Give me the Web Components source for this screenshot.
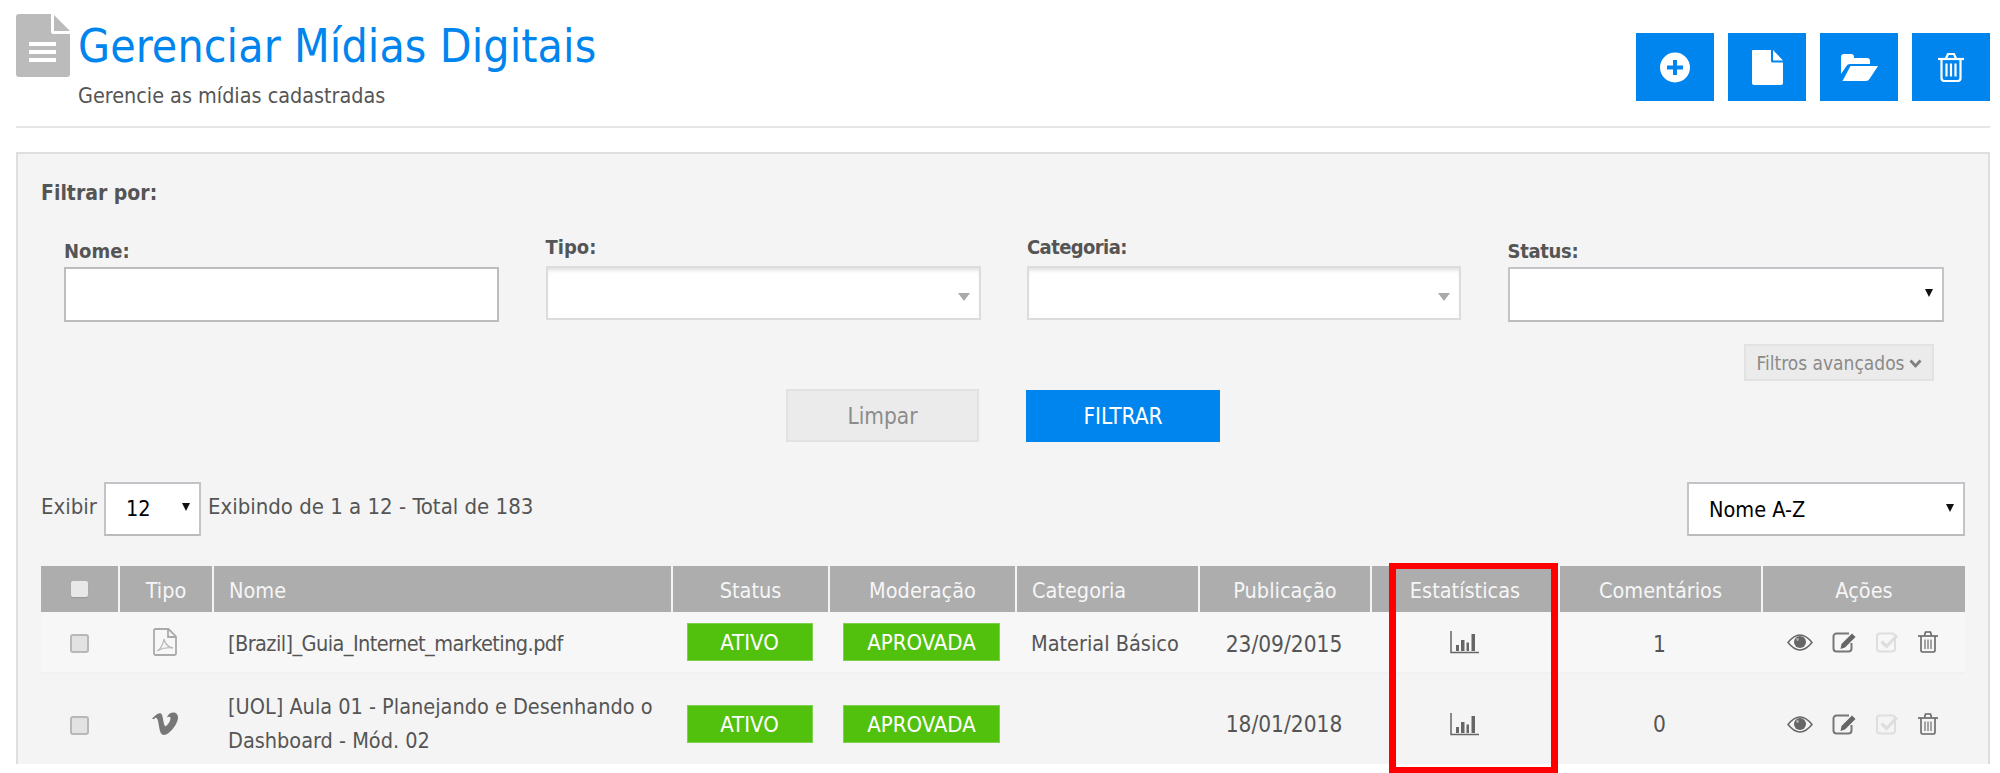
<!DOCTYPE html>
<html lang="pt-BR">
<head>
<meta charset="utf-8">
<title>Gerenciar Mídias Digitais</title>
<style>
html,body{margin:0;padding:0;background:#fff;}
body{width:2000px;height:773px;overflow:hidden;font-family:"DejaVu Sans Condensed","DejaVu Sans",sans-serif;font-stretch:condensed;color:#555;}
</style>
</head>
<body>
<media-page>
  <page-header slot="header" heading="Gerenciar Mídias Digitais" sub="Gerencie as mídias cadastradas">
    <icon-button icon="plus"></icon-button>
    <icon-button icon="file"></icon-button>
    <icon-button icon="folder"></icon-button>
    <icon-button icon="trash"></icon-button>
  </page-header>
  <filter-panel slot="panel">
    <span slot="title">Filtrar por:</span>
    <form-field slot="fields" label="Nome:" style="--top:1px"><text-box></text-box></form-field>
    <form-field slot="fields" label="Tipo:" style="--lift:-3px"><select-box kind="chosen"></select-box></form-field>
    <form-field slot="fields" label="Categoria:" style="--lift:-3px;--ls:-.6px"><select-box kind="chosen"></select-box></form-field>
    <form-field slot="fields" label="Status:" style="--top:1px;--ls:-.3px;--h:55px"><select-box></select-box></form-field>
    <advanced-toggle slot="advanced">Filtros avançados</advanced-toggle>
    <action-button slot="actions" kind="muted">Limpar</action-button>
    <action-button slot="actions" kind="primary">FILTRAR</action-button>
    <list-toolbar slot="toolbar" summary="Exibindo de 1 a 12 - Total de 183"></list-toolbar>
    <media-table slot="table">
      <media-row name="[Brazil]_Guia_Internet_marketing.pdf" type="pdf" category="Material Básico" date="23/09/2015" comments="1" style="--row-bg:#f7f7f7;--row-h:60px;--row-bb:2px solid #f1f1f1;--name-ls:-.57px;--text-dy:4px"></media-row>
      <media-row name="[UOL] Aula 01 - Planejando e Desenhando o Dashboard - Mód. 02" type="vimeo" category="" date="18/01/2018" comments="0" style="--row-bg:#f4f4f4;--row-h:100px;--date-dy:-1px"></media-row>
    </media-table>
  </filter-panel>
  <highlight-box slot="overlay"></highlight-box>
</media-page>

<script>
const ICONS = {
  plus:'<svg width="30" height="31" viewBox="0 0 30 31"><path fill="#fff" fill-rule="evenodd" d="M15 .5a15 15 0 1 1 0 30 15 15 0 0 1 0-30zM13 8v5.500H7v4h6V23h4v-5.500h6v-4h-6V8z"/></svg>',
  file:'<svg width="31" height="35" viewBox="0 0 31 35"><path fill="#fff" d="M1 0h18v11a1.500 1.500 0 0 0 1.500 1.500H31V33a2 2 0 0 1-2 2H2a2 2 0 0 1-2-2V1a1 1 0 0 1 1-1z"/><path fill="#fff" d="M21 0l10 10.500H21z"/></svg>',
  folder:'<svg width="37" height="27" viewBox="0 0 37 27"><path fill="#fff" d="M0 20V3a3 3 0 0 1 3-3h7a3 3 0 0 1 3 3v1h13a3 3 0 0 1 3 3v3H9a4 4 0 0 0-3.500 2z"/><path fill="#fff" d="M9.500 12H37l-8.500 13a5 5 0 0 1-3.500 2H1.500z"/></svg>',
  trash:'<svg width="28" height="30" viewBox="0 0 28 30"><g fill="none" stroke="#fff" stroke-width="2.200"><path d="M1 7h26"/><path d="M9 6.500l2-4.500h6l2 4.500"/><path d="M4.500 7v19a3 3 0 0 0 3 3h13a3 3 0 0 0 3-3V7"/></g><path stroke="#fff" stroke-width="2.200" d="M9.500 11.500V24.500M14 11.500V24.500M18.500 11.500V24.500"/></svg>',
  chart:'<svg width="29" height="23" viewBox="0 0 29 23"><path d="M1 0v21.500h28" fill="none" stroke="#666" stroke-width="1.500"/><path fill="#666" d="M6 14h3v6H6zM11 9h3.500v11H11zM16.500 11.500H19V20h-2.500zM21.500 3H25v17h-3.500z"/></svg>',
  eye:'<svg width="26" height="17" viewBox="0 0 26 17"><path d="M1 8.500C5 3.500 9 1 13 1s8 2.500 12 7.500c-4 5-8 7.500-12 7.500S5 13.500 1 8.500z" fill="none" stroke="#666" stroke-width="1.500"/><circle cx="13" cy="8" r="6" fill="#666"/><circle cx="10.500" cy="5.500" r="1.400" fill="#aaa"/></svg>',
  edit:'<svg width="25" height="21" viewBox="0 0 25 21"><path d="M17 1.500H4.500a3 3 0 0 0-3 3v12a3 3 0 0 0 3 3h12a3 3 0 0 0 3-3V11" fill="none" stroke="#777" stroke-width="2"/><path fill="#666" d="M20 1.500l3.500 3.500L13 15.500 8.500 17l1-5z"/></svg>',
  check:'<svg width="23" height="21" viewBox="0 0 23 21"><rect x="1" y="1.500" width="18" height="18" rx="3" fill="none" stroke="#dedede" stroke-width="2"/><path d="M5.500 9.500l5 5L21 3.500" fill="none" stroke="#dedede" stroke-width="3.200"/></svg>',
  trash2:'<svg width="20" height="22" viewBox="0 0 20 22"><g fill="none" stroke="#666" stroke-width="1.600"><path d="M0 5h20"/><path d="M6.500 4.500l1-3.500h5l1 3.500"/><path d="M3 5v14.500A1.500 1.500 0 0 0 4.500 21h11a1.500 1.500 0 0 0 1.500-1.500V5"/></g><path stroke="#888" stroke-width="1.500" d="M7 8.500V18M10 8.500V18M13 8.500V18"/></svg>',
  pdf:'<svg width="24" height="28" viewBox="0 0 24 28"><g fill="none" stroke="#aaa" stroke-width="1.800"><path d="M15.500 1H2.500A1.500 1.500 0 0 0 1 2.500v23A1.500 1.500 0 0 0 2.500 27h19a1.500 1.500 0 0 0 1.500-1.500V8.500z"/><path d="M15 1v8h8"/></g><path d="M4 23c3-1 6-6 7-12 1 5 4 8 9 9-5-1-11 0-16 3z" fill="none" stroke="#bbb" stroke-width="1.300"/></svg>',
  vimeo:'<svg width="26" height="23" viewBox="0 0 26 23"><path fill="#777" d="M0 6.500C3 3.500 6.500 0 9 1.500c2.200 1.400 2 10 4 12.500 1.500 1.500 5.500-5 5.500-7.500 0-2-1.500-2.300-3.500-1.300C16.500-.5 26-2 26 5.500 26 12 17 23 12 23 6.500 23 7.500 10 5 6.500c-1-1.300-2-.5-3.500.8z"/></svg>'
};
function def(name, css, html){
  customElements.define(name, class extends HTMLElement{
    connectedCallback(){
      if(this.shadowRoot) return;
      const r=this.attachShadow({mode:'open'});
      r.innerHTML='<style>'+css+'</style>'+(typeof html==='function'?html(this):html);
    }
  });
}
const esc=s=>(s||'').replace(/&/g,'&amp;').replace(/</g,'&lt;');

def('media-page',
 ':host{display:block;position:relative;width:2000px;height:773px;overflow:hidden;box-sizing:border-box;padding:14px 10px 0 16px}',
 '<slot name="header"></slot><slot name="panel"></slot><slot name="overlay"></slot>');

def('page-header',
 `:host{display:flex;box-sizing:border-box;height:114px;border-bottom:2px solid #e6e6e6;margin-bottom:24px}
  .doc{flex:none;width:54px;height:63px;margin-right:8px}
  .txt{flex:1;min-width:0}
  h1{margin:0;font-weight:400;font-size:46px;line-height:48px;margin-top:8px;color:#0084ee;letter-spacing:.1px;white-space:nowrap}
  p{margin:0;font-size:21.400px;line-height:22px;margin-top:15px;color:#555;white-space:nowrap}
  .btns{display:flex;gap:14px;margin-top:19px;height:68px}`,
 h=>`<svg class="doc" viewBox="0 0 54 63"><path fill="#bbb" d="M3 0h32v18a2 2 0 0 0 2 2h17v40a3 3 0 0 1-3 3H3a3 3 0 0 1-3-3V3a3 3 0 0 1 3-3z"/><path fill="#bbb" d="M38 1l16 16H38z"/><path fill="#fff" d="M13 28h27v4H13zM13 36h27v4H13zM13 44h27v4H13z"/></svg>
  <div class="txt"><h1>${esc(h.getAttribute('heading'))}</h1><p>${esc(h.getAttribute('sub'))}</p></div>
  <div class="btns"><slot></slot></div>`);

def('icon-button',
 `:host{display:flex;align-items:center;justify-content:center;width:78px;height:68px;background:#0084ee}`,
 h=>ICONS[h.getAttribute('icon')]);

def('filter-panel',
 `:host{display:block;box-sizing:border-box;width:1974px;height:612px;overflow:hidden;background:#f4f4f4;border:2px solid #dedede;border-bottom:0;padding:27px 23px 0}
  .title{font-weight:700;font-size:21px;line-height:24px;color:#555;margin-bottom:33px;white-space:nowrap}
  .fields{display:grid;grid-template-columns:435px 435px 434px 436px;column-gap:46.500px;padding-left:23px;height:83px}
  .adv{display:flex;justify-content:flex-end;margin-top:23px;padding-right:31px}
  .acts{display:flex;align-items:flex-end;gap:47px;margin-top:8px;padding-left:745px}
  .tb{margin-top:40px}
  .tbl{margin-top:31px}`,
 `<div class="title"><slot name="title"></slot></div>
  <div class="fields"><slot name="fields"></slot></div>
  <div class="adv"><slot name="advanced"></slot></div>
  <div class="acts"><slot name="actions"></slot></div>
  <div class="tb"><slot name="toolbar"></slot></div>
  <div class="tbl"><slot name="table"></slot></div>`);

def('form-field',
 `:host{display:block;padding-top:var(--top,0);--box-h:var(--h,54px)}
  label{display:block;height:28px;line-height:24px;font-weight:700;font-size:20px;color:#555;white-space:nowrap;letter-spacing:var(--ls,0)}
  span{display:block;transform:translateY(var(--lift,0))}`,
 h=>`<label><span>${esc(h.getAttribute('label'))}</span></label><slot></slot>`);

def('text-box',
 `:host{display:block;box-sizing:border-box;height:55px;background:#fff;border:2px solid #bdbdbd}`, '');

def('select-box',
 `:host{display:flex;box-sizing:border-box;height:var(--box-h,54px);background:#fff;align-items:center;justify-content:space-between;border:2px solid #c4c4c8;border-bottom-color:#bbb;padding:0 9px 0 18px;color:#000;font-size:21.500px}
  :host([kind=chosen]){border-color:#dcdcdc;box-shadow:inset 0 4px 4px -2px #ddd;padding-right:9px}
  i{display:block;width:0;height:0;border-left:4px solid transparent;border-right:4px solid transparent;border-top:8px solid #111;margin-top:-3px}
  :host([kind=chosen]) i{border-left-width:6px;border-right-width:6px;border-top:8px solid #aaa;margin-top:7px}`,
 `<span><slot></slot></span><i></i>`);

def('advanced-toggle',
 `:host{display:flex;align-items:center;justify-content:center;gap:4px;box-sizing:border-box;width:190px;height:37px;background:#ebebeb;border:2px solid #e2e2e2;color:#8a8a8a;font-size:19px;white-space:nowrap}
  svg{margin-top:2px}`,
 `<span><slot></slot></span><svg width="13" height="10" viewBox="0 0 13 10"><path d="M1.500 1.500L6.500 7l5-5.500" fill="none" stroke="#808080" stroke-width="2.800"/></svg>`);

def('action-button',
 `:host{display:flex;align-items:center;justify-content:center;box-sizing:border-box;width:193px;height:52px;font-size:22.500px}
  :host([kind=muted]){height:53px;background:#ebebeb;border:2px solid #e2e2e2;color:#8c8c8c}
  :host([kind=primary]){width:194px;background:#0084ee;color:#fff;font-weight:400}`,
 `<slot></slot>`);

def('list-toolbar',
 `:host{display:flex;justify-content:space-between;height:53px;font-size:22px;color:#555}
  .l{display:flex;align-items:center;gap:7px;white-space:nowrap}
  .txt{margin-top:-5px}
  select-box{width:97px;padding-left:20px}
  .r{width:278px}`,
 h=>`<div class="l"><span class="txt">Exibir</span><select-box>12</select-box><span class="txt">${esc(h.getAttribute('summary'))}</span></div>
     <select-box class="r">Nome A-Z</select-box>`);

const COLS='77px 94px 459px 157px 187px 183px 172px 188px 203px 204px';
def('media-table',
 `:host{display:block;width:1924px;--cols:${COLS}}
  .head{display:grid;grid-template-columns:var(--cols);height:46px;background:#adadad;color:#f6f6f6;font-size:21.500px}
  .head>div{display:flex;align-items:center;justify-content:center;border-left:2px solid #f4f4f4;white-space:nowrap;padding-top:2px;box-sizing:border-box}
  .head>div:first-child{border-left:0;padding-top:0}
  .head>.left{justify-content:flex-start;padding-left:15px}
  .cb{width:17px;height:16px;background:#e8e8e8;border-radius:2px;box-shadow:0 1px 1px #999}`,
 `<div class="head"><div><span class="cb"></span></div><div>Tipo</div><div class="left">Nome</div><div>Status</div><div>Moderação</div><div class="left">Categoria</div><div>Publicação</div><div>Estatísticas</div><div>Comentários</div><div>Ações</div></div><slot></slot>`);

def('media-row',
 `:host{display:grid;grid-template-columns:var(--cols);height:var(--row-h);background:var(--row-bg);border-bottom:var(--row-bb,0);font-size:21.500px;color:#555}
  .c{display:flex;align-items:center;justify-content:center;white-space:nowrap}
  .n{justify-content:flex-start;padding-left:16px;white-space:normal;line-height:34px;padding-right:0;padding-top:var(--text-dy,0)}
  .n.nm span{letter-spacing:var(--name-ls,0)}
  .d{font-size:22.500px;padding-top:var(--text-dy,0);margin-top:var(--date-dy,0)}
  .cb{width:19px;height:19px;box-sizing:border-box;background:#e2e2e2;border:2px solid #b8b8b8;border-radius:3px;margin-top:3px}
  .ty{margin-top:-1px}
  .acts{justify-content:flex-start;padding-left:26px;gap:19px}
  .acts svg{display:block}`,
 h=>{
  const a=n=>h.getAttribute(n)||'';
  return `<div class="c"><span class="cb"></span></div>
  <div class="c ty">${ICONS[a('type')]}</div>
  <div class="c n nm"><span>${esc(a('name'))}</span></div>
  <div class="c"><status-badge w="126">ATIVO</status-badge></div>
  <div class="c"><status-badge w="157">APROVADA</status-badge></div>
  <div class="c n"><span>${esc(a('category'))}</span></div>
  <div class="c d">${esc(a('date'))}</div>
  <div class="c">${ICONS.chart}</div>
  <div class="c d">${esc(a('comments'))}</div>
  <div class="c acts">${ICONS.eye}${ICONS.edit}${ICONS.check}${ICONS.trash2}</div>`;
 });

def('status-badge',
 `:host{display:flex;align-items:center;justify-content:center;box-sizing:border-box;height:38px;background:#52c10e;color:#fff;font-size:22px;border:1px solid #7ed04f}`,
 h=>{h.style.width=h.getAttribute('w')+'px';return '<slot></slot>';});

def('highlight-box',
 `:host{position:absolute;left:1389px;top:563px;width:169px;height:210px;box-sizing:border-box;border:solid #f00;border-width:6px 7px;pointer-events:none}`,'');
</script>
</body>
</html>
